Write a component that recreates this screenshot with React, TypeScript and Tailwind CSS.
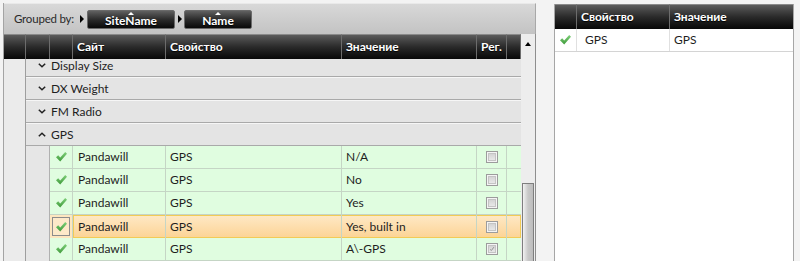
import React from "react";

const font = { fontFamily: "Lato, 'Noto Sans', sans-serif" };

function Check({ className = "" }: { className?: string }) {
  return (
    <svg width="11" height="10" viewBox="0 0 11 10" className={className}>
      <defs>
        <linearGradient id="ck" x1="0" y1="0" x2="0" y2="1">
          <stop offset="0" stopColor="#7fd07a" />
          <stop offset="1" stopColor="#3f9a3a" />
        </linearGradient>
      </defs>
      <polygon points="0,5.2 2.2,3.2 4.2,5.4 9.2,0 11,1.8 4.2,9.6" fill="url(#ck)" />
    </svg>
  );
}

function Chevron({ up = false }: { up?: boolean }) {
  return (
    <svg width="8" height="5" viewBox="0 0 8 5" className={up ? "rotate-180" : ""}>
      <path d="M0.8 0.8 L4 3.8 L7.2 0.8" fill="none" stroke="#222" strokeWidth="1.5" />
    </svg>
  );
}

function Box({ checked = false }: { checked?: boolean }) {
  return (
    <div className="w-[12px] h-[12px] border border-[#9c9c9c] bg-[#f4f4f4] p-[1px]">
      <div className="w-full h-full bg-linear-to-b from-[#d4d4d4] to-[#e8e8e8] border border-[#c4c4c4] flex items-center justify-center">
        {checked ? (
          <svg width="8" height="8" viewBox="0 0 8 8">
            <path d="M1.5 4.5 L3.2 6 L6.5 1.5" fill="none" stroke="#8a8a8a" strokeWidth="1.2" />
          </svg>
        ) : null}
      </div>
    </div>
  );
}

const headCls =
  "h-full shrink-0 border-r border-[#6c6c6c] border-t border-t-[#8a8a8a] bg-linear-to-b from-[#5c5c5c] via-[#2a2a2a] to-[#080808] flex items-center text-white font-bold text-[12px] pl-[4px] [text-shadow:0_1px_1px_#000]";

function GroupButton({ label, w }: { label: string; w: string }) {
  return (
    <div
      className={`${w} shrink-0 relative h-[19px] border border-[#6a6a6a] rounded-[2px] bg-linear-to-b from-[#606060] via-[#2c2c2c] to-[#0a0a0a] flex items-center justify-center text-white font-bold text-[12px] [text-shadow:0_1px_1px_#000]`}
    >
      <div className="absolute top-[1px] left-1/2 -translate-x-1/2 w-0 h-0 border-l-[3px] border-r-[3px] border-b-[3px] border-l-transparent border-r-transparent border-b-white" />
      <span className="mt-[3px]">{label}</span>
    </div>
  );
}

function Arrow() {
  return (
    <div className="shrink-0 w-0 h-0 border-t-[4px] border-b-[4px] border-l-[4px] border-t-transparent border-b-transparent border-l-black" />
  );
}

const groups = ["Display Size", "DX Weight", "FM Radio"];

const rows = [
  { v: "N/A" },
  { v: "No" },
  { v: "Yes" },
  { v: "Yes, built in", sel: true },
  { v: "A\\-GPS", checked: true },
];

function GroupRow({ label, open = false }: { label: string; open?: boolean }) {
  return (
    <div className="h-[23px] shrink-0 bg-[#e4e4e4] border-t border-t-[#f6f6f6] border-b border-b-[#a9a9a9] flex items-center pl-[12px] gap-[5px] text-[12px] text-[#1e1e1e]">
      <Chevron up={open} />
      <span>{label}</span>
    </div>
  );
}

function DataRow({ v, sel, checked }: { v: string; sel?: boolean; checked?: boolean }) {
  const cell = "h-full shrink-0 border-r border-[#c5d5c5] flex items-center";
  const rest = (
    <>
      <div className={`${cell} w-[93px] pl-[5px]`}>Pandawill</div>
      <div className={`${cell} w-[176px] pl-[4px]`}>GPS</div>
      <div className={`${cell} w-[135px] pl-[4px]`}>{v}</div>
      <div className={`${cell} w-[30px] justify-center`}>
        <Box checked={checked} />
      </div>
      <div className={`${cell} w-[14px] border-r-0`} />
    </>
  );
  return (
    <div className="h-[23px] shrink-0 flex text-[12px] text-[#1e1e1e]">
      <div className="w-[24px] h-full shrink-0 bg-[#e6e6e6] border-r border-[#b0b0b0]" />
      {sel ? (
        <div className="flex-1 flex h-full bg-[#fde6bf]">
          <div className="w-[23px] h-full shrink-0 p-[2px] border-r border-[#c5d5c5]">
            <div className="w-full h-full border border-[#8c8c8c] flex items-center justify-center bg-[#fde9c9]">
              <Check />
            </div>
          </div>
          <div className="flex-1 flex h-full mr-[2px] shadow-[inset_0_0_0_1px_#f2cb55] bg-linear-to-b from-[#fee9c6] to-[#fcd394]">
            {rest}
          </div>
        </div>
      ) : (
        <div className="flex-1 flex h-full bg-[#e0fde0] border-b border-[#c5d5c5]">
          <div className={`${cell} w-[23px] justify-center`}>
            <Check />
          </div>
          {rest}
        </div>
      )}
    </div>
  );
}

export default function App() {
  return (
    <div className="w-[800px] h-[261px] overflow-hidden flex bg-[#f3f3f3]" style={font}>
      {/* left grid */}
      <div className="ml-[3px] mt-[3px] w-[533px] flex flex-col border-l border-[#a4a4a4]">
        <div className="h-[31px] shrink-0 border-t border-[#e9e9e9] border-r border-r-[#a8a8a8] bg-linear-to-b from-[#d8d8d8] to-[#c3c3c3] flex items-center pl-[10px] text-[12px] text-[#2a2a2a]">
          <span className="w-[66px] shrink-0 whitespace-nowrap text-[11.5px] tracking-[-0.2px]">Grouped by:</span>
          <Arrow />
          <div className="w-[3px] shrink-0" />
          <GroupButton label="SiteName" w="w-[88px]" />
          <div className="w-[3px] shrink-0" />
          <Arrow />
          <div className="w-[2px] shrink-0" />
          <GroupButton label="Name" w="w-[68px]" />
        </div>
        <div className="flex-1 flex min-h-0">
          <div className="w-[517px] flex flex-col min-h-0">
            <div className="h-[25px] shrink-0 flex">
              <div className={`${headCls} w-[22px]`} />
              <div className={`${headCls} w-[24px]`} />
              <div className={`${headCls} w-[23px]`} />
              <div className={`${headCls} w-[93px]`}>Сайт</div>
              <div className={`${headCls} w-[176px]`}>Свойство</div>
              <div className={`${headCls} w-[135px]`}>Значение</div>
              <div className={`${headCls} w-[30px]`}>Рег.</div>
              <div className={`${headCls} w-[14px]`} />
            </div>
            <div className="flex-1 flex min-h-0 overflow-hidden">
              <div className="w-[22px] shrink-0 bg-[#ebebeb] border-r border-[#9e9e9e]" />
              <div className="flex-1 flex flex-col -mt-[5px]">
                {groups.map((g) => (
                  <GroupRow key={g} label={g} />
                ))}
                <GroupRow label="GPS" open />
                {rows.map((r) => (
                  <DataRow key={r.v} {...r} />
                ))}
              </div>
            </div>
          </div>
          {/* scrollbar */}
          <div className="w-[15px] shrink-0 bg-[#ededed] border-r border-[#8e8e8e] flex flex-col">
            <div className="h-[17px] flex items-center justify-center pt-[2px]">
              <div className="w-0 h-0 border-l-[3px] border-r-[3px] border-b-[4px] border-l-transparent border-r-transparent border-b-black" />
            </div>
            <div className="h-[132px]" />
            <div className="flex-1 mx-[1px] border border-[#7e7e7e] border-b-0 bg-linear-to-r from-[#f2f2f2] via-[#c8c8c8] to-[#bdbdbd]" />
          </div>
        </div>
      </div>
      {/* right grid */}
      <div className="ml-[18px] mt-[4px] w-[240px] flex flex-col bg-white border-l border-r border-[#a6a6a6]">
        <div className="h-[25px] shrink-0 flex">
          <div className={`${headCls} w-[22px]`} />
          <div className={`${headCls} w-[93px]`}>Свойство</div>
          <div className={`${headCls} flex-1 border-r-0`}>Значение</div>
        </div>
        <div className="h-[23px] shrink-0 flex border-b border-[#d4d4d4] text-[12px] text-[#1e1e1e]">
          <div className="w-[22px] h-full border-r border-[#e0e0e0] flex items-center justify-center">
            <Check />
          </div>
          <div className="w-[93px] h-full border-r border-[#e0e0e0] flex items-center pl-[8px]">GPS</div>
          <div className="flex-1 h-full flex items-center pl-[4px]">GPS</div>
        </div>
      </div>
    </div>
  );
}
